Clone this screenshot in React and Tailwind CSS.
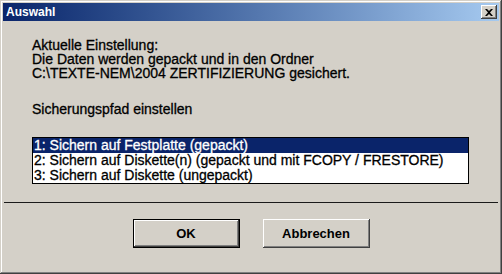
export default function App() {
  const font = { fontFamily: '"Liberation Sans", Arial, sans-serif' };
  return (
    <div
      className="w-[502px] h-[274px] bg-[#d4d0c8] flex flex-col p-[3px] shadow-[inset_-1px_-1px_#404040,inset_1px_1px_#d4d0c8,inset_-2px_-2px_#808080,inset_2px_2px_#ffffff] overflow-hidden"
      style={font}
    >
      <div className="h-[18px] flex items-center justify-between pl-[3px] pr-[2px] bg-gradient-to-r from-[#0a246a] to-[#a6caf0]">
        <span className="text-white font-bold text-[12px] leading-none">Auswahl</span>
        <div className="w-[16px] h-[14px] bg-[#d4d0c8] flex items-center justify-center shadow-[inset_-1px_-1px_#404040,inset_1px_1px_#ffffff,inset_-2px_-2px_#808080]">
          <svg width="8" height="7" viewBox="0 0 8 7">
            <path d="M0 0h2l2 2 2-2h2L5 3.5 8 7H6L4 5 2 7H0l3-3.5z" fill="#000" />
          </svg>
        </div>
      </div>
      <div className="flex-1 flex flex-col text-[14px] text-black [-webkit-text-stroke:0.3px_currentColor]">
        <div className="pl-[29px] pt-[17px] leading-[14px]">
          <div>Aktuelle Einstellung:</div>
          <div>Die Daten werden gepackt und in den Ordner</div>
          <div>C:\TEXTE-NEM\2004 ZERTIFIZIERUNG gesichert.</div>
          <div className="mt-[22px]">Sicherungspfad einstellen</div>
        </div>
        <div className="ml-[29px] mt-[21px] w-[437px] h-[47px] bg-white border border-black leading-[15px]">
          <div className="bg-[#0a246a] text-white pl-[1px] h-[15px]">1: Sichern auf Festplatte (gepackt)</div>
          <div className="pl-[1px] h-[15px]">2: Sichern auf Diskette(n) (gepackt und mit FCOPY / FRESTORE)</div>
          <div className="pl-[1px] h-[15px]">3: Sichern auf Diskette (ungepackt)</div>
        </div>
        <div className="mt-[18px] mx-[1px] h-px bg-[#1a1a1a]" />
        <div className="mt-[16px] flex justify-center gap-[23px]">
          <div className="w-[107px] h-[29px] border border-black flex items-center justify-center shadow-[inset_-1px_-1px_#404040,inset_1px_1px_#ffffff,inset_-2px_-2px_#808080]">
            <span className="font-bold text-[13px] [-webkit-text-stroke:0px]">OK</span>
          </div>
          <div className="w-[107px] h-[29px] flex items-center justify-center shadow-[inset_-1px_-1px_#404040,inset_1px_1px_#ffffff,inset_-2px_-2px_#808080]">
            <span className="font-bold text-[13px] [-webkit-text-stroke:0px]">Abbrechen</span>
          </div>
        </div>
      </div>
    </div>
  );
}
